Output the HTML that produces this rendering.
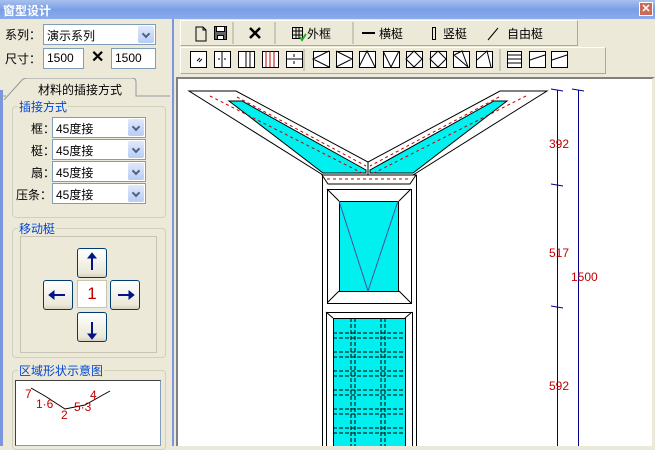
<!DOCTYPE html>
<html><head><meta charset="utf-8"><style>
*{box-sizing:border-box;margin:0;padding:0}
body{width:655px;height:446px;overflow:hidden;background:#ece9d8;position:relative;font-family:"Liberation Sans","Noto Sans CJK SC",sans-serif;font-size:12px;color:#000}
.a{position:absolute}
.title{left:0;top:0;width:655px;height:19px;background:linear-gradient(#a8c0ee,#7a9ee6 50%,#8aacec);color:#fff;font-weight:bold;font-size:12px;padding:2px 0 0 3px}
.close{right:2px;top:2px;width:14px;height:14px;background:#c96a5a;border:1px solid #fff;color:#fff;font-size:11px;line-height:12px;text-align:center;font-weight:bold}
.inp{background:#fff;border:1px solid #7f9db9;height:21px;padding:2px 3px;font-size:12px}
.dd{position:absolute;right:1px;top:1px;width:16px;height:17px;background:linear-gradient(#e0e8fb,#b8cdf4);border-radius:2px}
.dd:after{content:"";position:absolute;left:5px;top:5px;width:4px;height:4px;border-right:2px solid #4d6185;border-bottom:2px solid #4d6185;transform:rotate(45deg)}
.grp{border:1px solid #d0d0bf;border-radius:4px}
.gl{color:#0046d5;background:#ece9d8;padding:0 1px;font-size:12px}
.btn{width:30px;height:30px;border:1px solid #003c74;border-radius:3px;background:linear-gradient(#fff,#ece9d8 85%,#d6d0c0)}
.tb{border:1px solid #fff;border-right-color:#aca899;border-bottom-color:#aca899}
</style></head><body>
<div class="a title">窗型设计</div>
<div class="a close">✕</div>
<div class="a" style="left:0;top:90px;width:3px;height:356px;background:#7a96df"></div>
<div class="a" style="left:172px;top:19px;width:2px;height:427px;background:#7a96df"></div>

<div class="a" style="left:5px;top:26px">系列：</div>
<div class="a inp" style="left:43px;top:24px;width:113px">演示系列<div class="dd"></div></div>
<div class="a" style="left:5px;top:50px">尺寸：</div>
<div class="a inp" style="left:43px;top:48px;width:41px">1500</div>
<div class="a" style="left:91px;top:47px;font-size:16px;font-weight:bold">✕</div>
<div class="a inp" style="left:111px;top:48px;width:45px">1500</div>

<svg class="a" style="left:0;top:78px" width="172" height="22"><path d="M4 22 L22 2 Q24 0 28 0 L132 0 Q136 0 136 4 L136 18 L170 18" fill="none" stroke="#919b9c"/><path d="M0 18 L6 18" stroke="#919b9c"/></svg>
<div class="a" style="left:38px;top:81px">材料的插接方式</div>

<div class="a grp" style="left:12px;top:106px;width:154px;height:112px"></div>
<div class="a gl" style="left:18px;top:98px">插接方式</div>
<div class="a" style="left:31px;top:120px">框：</div>
<div class="a" style="left:31px;top:142px">梃：</div>
<div class="a" style="left:31px;top:164px">扇：</div>
<div class="a" style="left:16px;top:186px">压条：</div>
<div class="a inp" style="left:52px;top:117px;width:94px">45度接<div class="dd"></div></div>
<div class="a inp" style="left:52px;top:139px;width:94px">45度接<div class="dd"></div></div>
<div class="a inp" style="left:52px;top:161px;width:94px">45度接<div class="dd"></div></div>
<div class="a inp" style="left:52px;top:183px;width:94px">45度接<div class="dd"></div></div>

<div class="a grp" style="left:12px;top:228px;width:154px;height:130px"></div>
<div class="a gl" style="left:18px;top:220px">移动梃</div>
<div class="a" style="left:20px;top:236px;width:137px;height:117px;border:1px solid #c8c4b4"></div>
<div class="a btn" style="left:77px;top:248px"></div>
<div class="a btn" style="left:43px;top:280px"></div>
<div class="a" style="left:77px;top:280px;width:30px;height:28px;background:#fff;border:1px solid #c8c4b4;color:#c00000;font-size:17px;text-align:center;line-height:26px">1</div>
<div class="a btn" style="left:110px;top:280px"></div>
<div class="a btn" style="left:77px;top:312px"></div>
<svg class="a" style="left:0;top:0" width="172" height="446"><g stroke="#00158a" stroke-width="2" fill="#00158a">
<path d="M92 270v-14"/><path d="M88 258l4-5 4 5z" stroke-width="1"/>
<path d="M92 322v14"/><path d="M88 334l4 5 4-5z" stroke-width="1"/>
<path d="M51 295h14"/><path d="M54 291l-5 4 5 4z" stroke-width="1"/>
<path d="M118 295h14"/><path d="M129 291l5 4-5 4z" stroke-width="1"/>
</g></svg>

<div class="a grp" style="left:12px;top:370px;width:154px;height:80px"></div>
<div class="a gl" style="left:18px;top:362px">区域形状示意图</div>
<div class="a" style="left:15px;top:380px;width:146px;height:66px;background:#fff;border:1px solid #7f9db9;border-left-color:#404040;border-top-color:#404040"></div>
<svg class="a" style="left:15px;top:380px" width="146" height="66"><path d="M16 8 L30 16 L50 29 L70 25 L86 16 L95 11" fill="none" stroke="#000"/><g fill="#c00000" font-size="12" font-family="Liberation Sans"><text x="10" y="18">7</text><text x="21" y="28">1·6</text><text x="46" y="39">2</text><text x="59" y="31">5·3</text><text x="75" y="19">4</text></g></svg>

<div class="a tb" style="left:180px;top:20px;width:398px;height:26px"></div>
<div class="a tb" style="left:180px;top:47px;width:426px;height:27px"></div>
<svg class="a" style="left:0;top:0" width="655" height="78">
<g fill="none" stroke="#000">
<path d="M196 27h7l3 3v11h-10z M203 27v3h3"/>
<rect x="214.5" y="26.5" width="12" height="13" fill="#666"/><rect x="216.5" y="26.5" width="8" height="5" fill="#fff"/><rect x="217.5" y="35.5" width="6" height="4" fill="#fff"/>
<path d="M250 28l10 10M260 28l-10 10" stroke-width="2.5"/>
<rect x="292.5" y="27.5" width="10" height="11"/><path d="M292 31h11M292 35h11M296 27v12M299 27v12"/>
<path d="M362 33h13" stroke-width="2"/><rect x="432.5" y="27.5" width="3" height="12"/><path d="M488 40l10-12"/>
</g>
<path d="M300 37l2 3 4-6" stroke="#2a2" stroke-width="2" fill="none"/>
<g fill="#fff" stroke="#000">
<rect x="190.5" y="51.5" width="16" height="16"/><rect x="214.5" y="51.5" width="16" height="16"/><rect x="238.5" y="51.5" width="16" height="16"/><rect x="262.5" y="51.5" width="16" height="16"/><rect x="286.5" y="51.5" width="16" height="16"/>
<rect x="313.5" y="51.5" width="16" height="16"/><rect x="336.5" y="51.5" width="16" height="16"/><rect x="359.5" y="51.5" width="16" height="16"/><rect x="383.5" y="51.5" width="16" height="16"/><rect x="406.5" y="51.5" width="16" height="16"/><rect x="430.5" y="51.5" width="16" height="16"/><rect x="453.5" y="51.5" width="16" height="16"/><rect x="476.5" y="51.5" width="16" height="16"/>
<rect x="507.5" y="51.5" width="14" height="16"/><rect x="529.5" y="51.5" width="16" height="16"/><rect x="551.5" y="51.5" width="16" height="16"/>
</g>
<g fill="none" stroke="#000">
<path d="M197 61l3-3M199 62l3-3"/><path d="M222 51v16M218 59h2M224 59h2M246 51v16M250 51v16"/>
<path d="M266 51v16M270 51v16M274 51v16" stroke="#b00"/><path d="M286 59h16M294 54v3M294 61v3"/>
<path d="M329 51l-16 8 16 8M336 51l16 8-16 8M359 67l8-16 8 16M383 51l8 16 8-16M414 51l-8 8 8 8 8-8z M438 51l-8 8 8 8 8-8-8-8 M454 55l8-4 6 16zM477 60l10-9 4 16"/>
<path d="M507 55h14M507 59h14M507 63h14M530 60l15-5M552 60l15-5"/>
</g>
<path d="M233 22v22M275 22v22M353 22v22M304 49v22M500 49v22" stroke="#aca899"/>
<g font-size="12" font-family="Liberation Sans,Noto Sans CJK SC"><text x="307" y="38">外框</text><text x="379" y="38">横梃</text><text x="443" y="38">竖梃</text><text x="507" y="38">自由梃</text></g>
</svg>

<div class="a" style="left:176px;top:77px;width:479px;height:369px;background:#fff;border-top:2px solid #808080;border-left:2px solid #808080;border-right:3px solid #ece9d8"></div>
<svg class="a" style="left:0;top:0" width="655" height="446">
<g stroke="#000" fill="#fff" stroke-width="1">
<polygon points="189,91 236,91 368,162 368,175 323,175"/>
<polygon points="547,91 500,91 368,162 368,175 413,175"/>
<polygon points="229,101 242,101 366,170 366,173 323,173" fill="#00f0f0"/>
<polygon points="507,101 494,101 370,170 370,173 413,173" fill="#00f0f0"/>
<rect x="322.5" y="175.5" width="94" height="280"/>
<polygon points="322,175 416,175 410,184 328,184"/>
<rect x="327.5" y="189.5" width="84" height="114"/>
<path d="M327 189l12 12M411 189l-12 12M327 303l12-12M411 303l-12-12" fill="none"/>
<rect x="339.5" y="201.5" width="59" height="90" fill="#00f0f0"/>
<path d="M339 201l29 90 30-90" fill="none" stroke="#4a4aa0"/>
<rect x="326.5" y="312.5" width="86" height="140"/>
<rect x="333.5" y="318.5" width="72" height="130" fill="#00f0f0"/>
<path d="M326 312l7 6M412 312l-7 6" fill="none"/>
</g>
<g stroke="#000" stroke-dasharray="4,2" fill="none">
<path d="M333 333h72M333 338h72M333 352h72M333 357h72M333 371h72M333 376h72M333 390h72M333 395h72M333 409h72M333 414h72M333 428h72M333 433h72"/>
<path d="M351 318v128M355 318v128M381 318v128M385 318v128"/>
</g>
<g stroke="#c00000" stroke-dasharray="3,3" fill="none">
<path d="M210 96L364 174M237 97L366 166M327 179h84M526 96L372 174M499 97L370 166"/>
</g>
<g stroke="#00008b" fill="none">
<path d="M557.5 90v356M578.5 90v356"/>
<path d="M551 89l12 2M572 89l12 2M551 184l12 2M551 306l12 2"/>
</g>
<g fill="#c00000" font-size="12" font-family="Liberation Sans">
<text x="549" y="148">392</text><text x="549" y="257">517</text><text x="571" y="281">1500</text><text x="549" y="390">592</text>
</g>
</svg>
</body></html>
